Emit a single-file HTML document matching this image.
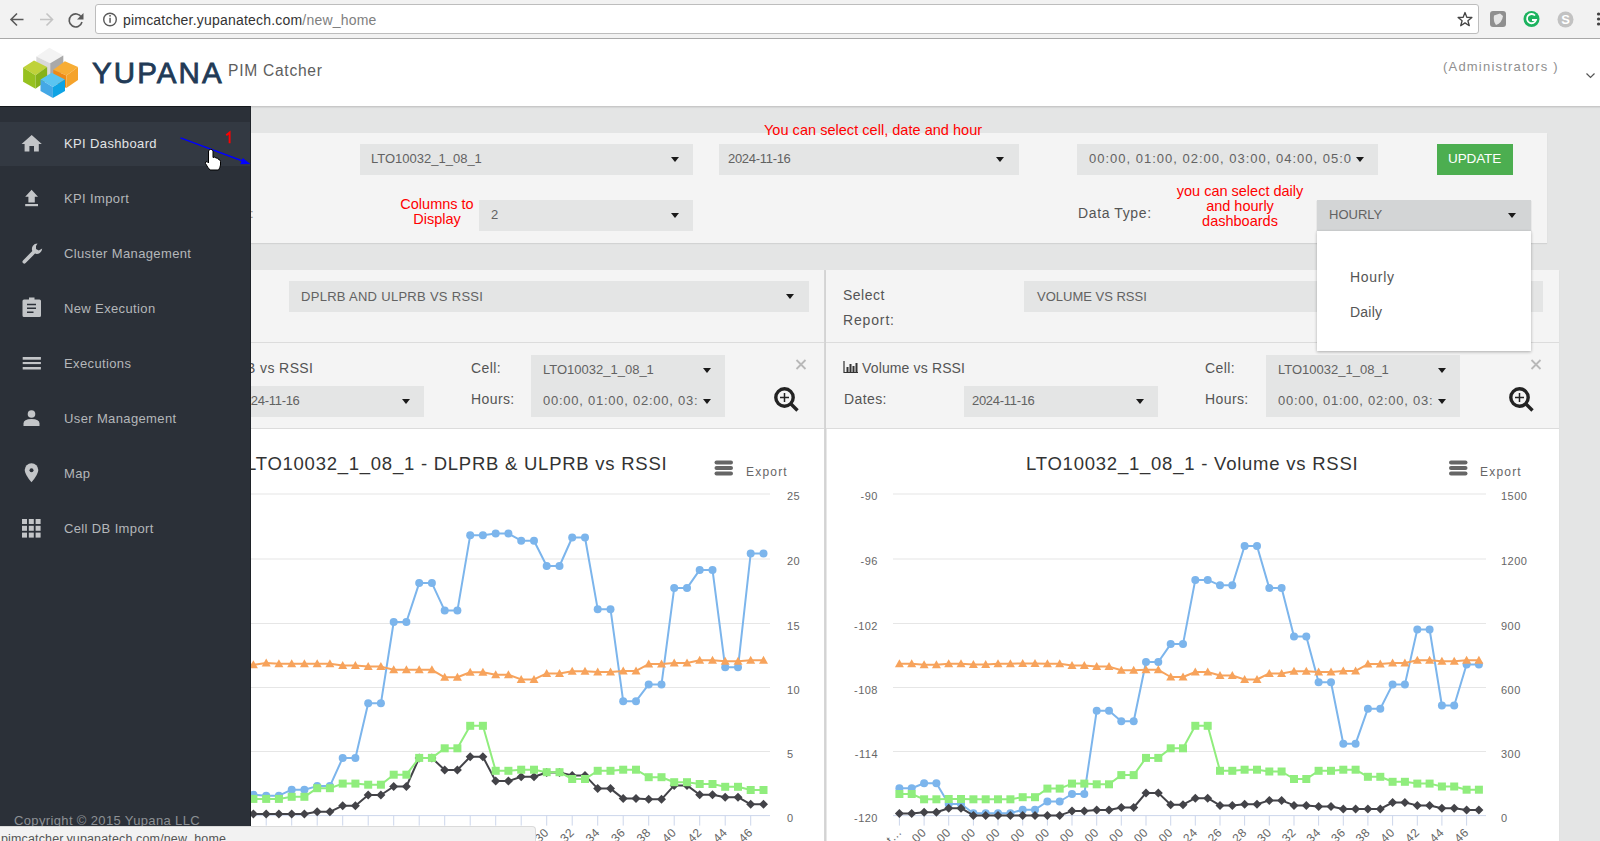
<!DOCTYPE html>
<html><head><meta charset="utf-8">
<style>
*{margin:0;padding:0;box-sizing:border-box}
html,body{width:1600px;height:841px;overflow:hidden;background:#e4e5e5;font-family:"Liberation Sans",sans-serif;position:relative}
.a{position:absolute}
.t{position:absolute;white-space:nowrap;line-height:1}
#chrome{left:0;top:0;width:1600px;height:39px;background:#f2f2f2;border-bottom:1px solid #a9a9a9}
#addr{left:95px;top:4px;width:1384px;height:30px;background:#fff;border:1px solid #bdbdbd;border-radius:3px}
#hdr{left:0;top:39px;width:1600px;height:68px;background:#fff;border-bottom:1px solid #c8c8c8;box-shadow:0 1px 1px rgba(0,0,0,0.06)}
#side{left:0;top:106px;width:251px;height:721px;background:#2b3038;border-right:1px solid #1f2329;border-top:1px solid #15181c}
.mi{position:absolute;left:64px;font-size:13px;color:#b4b7ba;letter-spacing:0.37px;white-space:nowrap;line-height:1}
.ic{position:absolute;left:0;top:0}
.panel{background:#f4f4f4;box-shadow:0 1px 1px rgba(0,0,0,0.08)}
.sel{position:absolute;background:#e4e5e5}
.caret{position:absolute;width:0;height:0;border-left:4.5px solid transparent;border-right:4.5px solid transparent;border-top:5px solid #1a1a1a}
.red{position:absolute;color:#ff0000;font-size:14.5px;text-align:center;white-space:nowrap;line-height:15px}
.lbl{position:absolute;font-size:14px;color:#555;white-space:nowrap;letter-spacing:0.4px;line-height:1}
.st{position:absolute;font-size:13px;color:#626262;white-space:nowrap;letter-spacing:0.6px;line-height:1;margin-top:-1px}
.ax{font-size:11px;fill:#666;font-family:"Liberation Sans",sans-serif}
</style></head><body>

<!-- ============ browser chrome ============ -->
<div id="chrome" class="a"></div>
<div id="addr" class="a"></div>
<svg class="a" style="left:0;top:0" width="1600" height="39">
  <!-- back -->
  <path d="M23.5,19.5H11M17,13.5L11,19.5L17,25.5" fill="none" stroke="#5a5a5a" stroke-width="1.6"/>
  <!-- forward -->
  <path d="M40,19.5H52.5M46.5,13.5L52.5,19.5L46.5,25.5" fill="none" stroke="#c4c4c4" stroke-width="1.6"/>
  <!-- reload -->
  <path d="M81.5,17.5A6.5,6.5 0 1 0 82,22" fill="none" stroke="#5a5a5a" stroke-width="1.6"/>
  <path d="M83.5,13V19.5H77Z" fill="#5a5a5a"/>
  <!-- info -->
  <circle cx="110" cy="19.5" r="6.3" fill="none" stroke="#5a5a5a" stroke-width="1.4"/>
  <rect x="109.3" y="17.8" width="1.5" height="5" fill="#5a5a5a"/><rect x="109.3" y="15" width="1.5" height="1.6" fill="#5a5a5a"/>
  <!-- star -->
  <path d="M1465.0,12.5L1466.8,17.3L1471.9,17.5L1467.9,20.8L1469.3,25.7L1465.0,22.9L1460.7,25.7L1462.1,20.8L1458.1,17.5L1463.2,17.3Z" fill="none" stroke="#444" stroke-width="1.3" stroke-linejoin="round"/>
  <!-- ext 1 gray shield -->
  <rect x="1490" y="11" width="16" height="16" rx="3" fill="#8f8f8f"/>
  <path d="M1494,15.5L1500,13.5L1503,16Q1502,23 1496,25Q1493,21 1494,15.5Z" fill="#e6e6e6"/>
  <!-- ext 2 grammarly -->
  <circle cx="1531.5" cy="19" r="8" fill="#1db35f"/>
  <path d="M1535,15.5A4.6,4.6 0 1 0 1536,20H1532" fill="none" stroke="#fff" stroke-width="1.8"/>
  <!-- ext 3 skype gray -->
  <circle cx="1565.5" cy="19.5" r="8" fill="#c2c2c2"/>
  <text x="1565.5" y="24" text-anchor="middle" font-size="13" font-weight="bold" fill="#fff" font-family="Liberation Sans">S</text>
  <!-- menu dots -->
  <circle cx="1598.5" cy="14" r="1.6" fill="#444"/><circle cx="1598.5" cy="19" r="1.6" fill="#444"/><circle cx="1598.5" cy="24" r="1.6" fill="#444"/>
</svg>
<div class="t" style="left:123px;top:13px;font-size:14px;letter-spacing:0.2px;color:#333">pimcatcher.yupanatech.com<span style="color:#808080">/new_home</span></div>

<!-- ============ header ============ -->
<div id="hdr" class="a"></div>
<svg class="a" style="left:0;top:39px" width="100" height="67" viewBox="0 39 100 67">
  <!-- white cube -->
  <path d="M36.3,56.6L49.4,47.7L63.3,55.5L50.2,63.2Z" fill="#f3f3f3"/>
  <path d="M36.3,56.6L50.2,63.2L50.2,78L36.3,72Z" fill="#d9d9d9"/>
  <path d="M50.2,63.2L63.3,55.5L63.3,72L50.2,78Z" fill="#a9a9a9"/>
  <!-- green cube -->
  <path d="M23.1,67.4L34,60.5L47.1,67L35.5,75.2Z" fill="#bfd23a"/>
  <path d="M23.1,67.4L35.5,75.2L35.5,88.7L23.1,81.7Z" fill="#96c11f"/>
  <path d="M35.5,75.2L47.1,67L47.1,80.5L35.5,88.7Z" fill="#86b21a"/>
  <!-- orange cube -->
  <path d="M53.3,69.8L64.9,61.3L78,67L66.4,75.5Z" fill="#f7ad35"/>
  <path d="M53.3,69.8L66.4,75.5L66.4,88L53.3,82Z" fill="#ee8a16"/>
  <path d="M66.4,75.5L78,67L78,80L66.4,88Z" fill="#f5a32b"/>
  <!-- blue cube -->
  <path d="M40.5,79.4L51.7,72.8L65,79.4L52.9,87.1Z" fill="#5ac4f1"/>
  <path d="M40.5,79.4L52.9,87.1L52.9,98L40.5,91Z" fill="#44a8e6"/>
  <path d="M52.9,87.1L65,79.4L65,91L52.9,98Z" fill="#0ea3e4"/>
</svg>
<div class="t" style="left:92px;top:58.3px;font-size:29.5px;color:#213a56;letter-spacing:2.1px;-webkit-text-stroke:0.8px #213a56">YUPANA</div>
<div class="t" style="left:228px;top:62.7px;font-size:15.6px;color:#5d5d5d;letter-spacing:0.73px">PIM Catcher</div>
<div class="t" style="left:1443px;top:60px;font-size:13px;color:#8f8f8f;letter-spacing:1.2px">(Administrators )</div>
<svg class="a" style="left:1584px;top:70px" width="14" height="10"><path d="M2.5,3.5L6.5,7.5L10.5,3.5" fill="none" stroke="#555" stroke-width="1.2"/></svg>

<!-- ============ main: filter panel ============ -->
<div class="a panel" style="left:250px;top:133px;width:1297px;height:110px"></div>
<div class="sel" style="left:360px;top:144px;width:333px;height:31px"></div>
<div class="st" style="left:371px;top:153px;letter-spacing:0">LTO10032_1_08_1</div>
<div class="caret" style="left:671px;top:157px"></div>

<div class="sel" style="left:719px;top:144px;width:300px;height:31px"></div>
<div class="st" style="left:728px;top:153px;letter-spacing:-0.3px">2024-11-16</div>
<div class="caret" style="left:996px;top:157px"></div>

<div class="sel" style="left:1077px;top:144px;width:301px;height:31px;overflow:hidden">
  <div class="st" style="left:12px;top:9px;letter-spacing:1.0px;width:262px;overflow:hidden">00:00, 01:00, 02:00, 03:00, 04:00, 05:00</div>
</div>
<div class="caret" style="left:1356px;top:157px"></div>

<div class="a" style="left:1437px;top:144px;width:76px;height:31px;background:#4cae50"></div>
<div class="t" style="left:1448px;top:152px;font-size:13.5px;color:#fff;letter-spacing:-0.1px">UPDATE</div>

<div class="red" style="left:764px;top:123px;letter-spacing:0.03px">You can select cell, date and hour</div>
<div class="red" style="left:396px;top:197px;width:82px">Columns to<br>Display</div>
<div class="sel" style="left:479px;top:200px;width:214px;height:31px"></div>
<div class="st" style="left:491px;top:209px">2</div>
<div class="caret" style="left:671px;top:213px"></div>
<div class="t" style="left:250px;top:207px;font-size:13px;color:#888">:</div>

<div class="lbl" style="left:1078px;top:206px;letter-spacing:0.62px">Data Type:</div>
<div class="red" style="left:1170px;top:184px;width:140px">you can select daily<br>and hourly<br>dashboards</div>

<div class="a" style="left:1317px;top:200px;width:214px;height:31px;background:#d3d5d6;box-shadow:0 1px 1px rgba(0,0,0,0.25)"></div>
<div class="st" style="left:1329px;top:209px;letter-spacing:0px">HOURLY</div>
<div class="caret" style="left:1508px;top:213px"></div>

<!-- ============ report row ============ -->
<div class="a panel" style="left:250px;top:270px;width:574px;height:571px"></div>
<div class="a" style="left:824px;top:270px;width:2px;height:571px;background:#d6d6d6"></div>
<div class="a panel" style="left:826px;top:270px;width:733px;height:571px"></div>
<!-- separators -->
<div class="a" style="left:250px;top:342px;width:574px;height:1px;background:#dcdcdc"></div>
<div class="a" style="left:826px;top:342px;width:733px;height:1px;background:#dcdcdc"></div>
<div class="a" style="left:250px;top:428px;width:574px;height:1px;background:#dcdcdc"></div>
<div class="a" style="left:826px;top:428px;width:733px;height:1px;background:#dcdcdc"></div>
<!-- chart white areas -->
<div class="a" style="left:250px;top:429px;width:574px;height:412px;background:#fff"></div>
<div class="a" style="left:826px;top:429px;width:733px;height:412px;background:#fff;border-left:1px solid #e8e8e8"></div>

<!-- left panel controls -->
<div class="sel" style="left:289px;top:281px;width:520px;height:31px"></div>
<div class="st" style="left:301px;top:291px;letter-spacing:0.29px">DPLRB AND ULPRB VS RSSI</div>
<div class="caret" style="left:786px;top:294px"></div>

<div class="lbl" style="left:246px;top:361px">B vs RSSI</div>
<div class="sel" style="left:250px;top:386px;width:174px;height:31px"></div>
<div class="st" style="left:237px;top:395px;letter-spacing:-0.3px">2024-11-16</div>
<div class="caret" style="left:402px;top:399px"></div>
<div class="lbl" style="left:471px;top:361px">Cell:</div>
<div class="lbl" style="left:471px;top:392px">Hours:</div>
<div class="sel" style="left:531px;top:355px;width:194px;height:62px"></div>
<div class="st" style="left:543px;top:364px;letter-spacing:0">LTO10032_1_08_1</div>
<div class="caret" style="left:703px;top:368px"></div>
<div class="a" style="left:531px;top:386px;width:194px;height:31px;overflow:hidden">
 <div class="st" style="left:12px;top:9px;width:155px;overflow:hidden;letter-spacing:0.75px">00:00, 01:00, 02:00, 03:00</div>
</div>
<div class="caret" style="left:703px;top:399px"></div>
<svg class="a" style="left:790px;top:354px" width="22" height="22"><path d="M6.5,6L15.5,15M15.5,6L6.5,15" stroke="#b8b8b8" stroke-width="1.8"/></svg>
<svg class="a" style="left:770.5px;top:384px" width="34" height="34">
  <circle cx="13.5" cy="13.5" r="8.7" fill="none" stroke="#232323" stroke-width="3.4"/>
  <path d="M19.5,19.5L26.5,26.5" stroke="#232323" stroke-width="3.4"/>
  <path d="M13.5,9V18M9,13.5H18" stroke="#232323" stroke-width="1.5"/>
</svg>

<!-- right panel controls -->
<div class="lbl" style="left:843px;top:288px;letter-spacing:0.5px">Select</div>
<div class="lbl" style="left:843px;top:313px;letter-spacing:0.85px">Report:</div>
<div class="sel" style="left:1024px;top:281px;width:519px;height:31px"></div>
<div class="st" style="left:1037px;top:291px;letter-spacing:0px">VOLUME VS RSSI</div>

<svg class="a" style="left:843px;top:360px" width="16" height="14">
  <path d="M1,1V12.5H15" fill="none" stroke="#333" stroke-width="1.2"/>
  <rect x="3.5" y="7" width="2" height="5" fill="#333"/><rect x="6.5" y="4" width="2" height="8" fill="#333"/>
  <rect x="9.5" y="6" width="2" height="6" fill="#333"/><rect x="12.5" y="3" width="2" height="9" fill="#333"/>
</svg>
<div class="lbl" style="left:862px;top:361px;letter-spacing:0.14px">Volume vs RSSI</div>
<div class="lbl" style="left:844px;top:392px">Dates:</div>
<div class="sel" style="left:964px;top:386px;width:194px;height:31px"></div>
<div class="st" style="left:972px;top:395px;letter-spacing:-0.3px">2024-11-16</div>
<div class="caret" style="left:1136px;top:399px"></div>
<div class="lbl" style="left:1205px;top:361px">Cell:</div>
<div class="lbl" style="left:1205px;top:392px">Hours:</div>
<div class="sel" style="left:1266px;top:355px;width:194px;height:62px"></div>
<div class="st" style="left:1278px;top:364px;letter-spacing:0">LTO10032_1_08_1</div>
<div class="caret" style="left:1438px;top:368px"></div>
<div class="a" style="left:1266px;top:386px;width:194px;height:31px;overflow:hidden">
 <div class="st" style="left:12px;top:9px;width:155px;overflow:hidden;letter-spacing:0.75px">00:00, 01:00, 02:00, 03:00</div>
</div>
<div class="caret" style="left:1438px;top:399px"></div>
<svg class="a" style="left:1525px;top:354px" width="22" height="22"><path d="M6.5,6L15.5,15M15.5,6L6.5,15" stroke="#b8b8b8" stroke-width="1.8"/></svg>
<svg class="a" style="left:1505.5px;top:384px" width="34" height="34">
  <circle cx="13.5" cy="13.5" r="8.7" fill="none" stroke="#232323" stroke-width="3.4"/>
  <path d="M19.5,19.5L26.5,26.5" stroke="#232323" stroke-width="3.4"/>
  <path d="M13.5,9V18M9,13.5H18" stroke="#232323" stroke-width="1.5"/>
</svg>

<!-- ============ charts ============ -->
<svg class="a" style="left:0;top:0" width="1600" height="841">
  <defs><clipPath id="cl"><rect x="250" y="429" width="574" height="412"/></clipPath>
  <clipPath id="cr"><rect x="827" y="429" width="732" height="412"/></clipPath></defs>
  <g clip-path="url(#cl)"><rect x="150" y="493.5" width="620" height="1" fill="#e6e6e6"/><rect x="150" y="558.5" width="620" height="1" fill="#e6e6e6"/><rect x="150" y="623.0" width="620" height="1" fill="#e6e6e6"/><rect x="150" y="687.0" width="620" height="1" fill="#e6e6e6"/><rect x="150" y="751.0" width="620" height="1" fill="#e6e6e6"/><rect x="150" y="815.1" width="620" height="1" fill="#ccd6eb"/><rect x="163.7" y="815.6" width="1" height="10" fill="#ccd6eb"/><rect x="189.2" y="815.6" width="1" height="10" fill="#ccd6eb"/><rect x="214.7" y="815.6" width="1" height="10" fill="#ccd6eb"/><rect x="240.2" y="815.6" width="1" height="10" fill="#ccd6eb"/><rect x="265.7" y="815.6" width="1" height="10" fill="#ccd6eb"/><rect x="291.2" y="815.6" width="1" height="10" fill="#ccd6eb"/><rect x="316.7" y="815.6" width="1" height="10" fill="#ccd6eb"/><rect x="342.2" y="815.6" width="1" height="10" fill="#ccd6eb"/><rect x="367.7" y="815.6" width="1" height="10" fill="#ccd6eb"/><rect x="393.2" y="815.6" width="1" height="10" fill="#ccd6eb"/><rect x="418.7" y="815.6" width="1" height="10" fill="#ccd6eb"/><rect x="444.2" y="815.6" width="1" height="10" fill="#ccd6eb"/><rect x="469.7" y="815.6" width="1" height="10" fill="#ccd6eb"/><rect x="495.2" y="815.6" width="1" height="10" fill="#ccd6eb"/><rect x="520.7" y="815.6" width="1" height="10" fill="#ccd6eb"/><rect x="546.2" y="815.6" width="1" height="10" fill="#ccd6eb"/><rect x="571.7" y="815.6" width="1" height="10" fill="#ccd6eb"/><rect x="597.2" y="815.6" width="1" height="10" fill="#ccd6eb"/><rect x="622.7" y="815.6" width="1" height="10" fill="#ccd6eb"/><rect x="648.2" y="815.6" width="1" height="10" fill="#ccd6eb"/><rect x="673.7" y="815.6" width="1" height="10" fill="#ccd6eb"/><rect x="699.2" y="815.6" width="1" height="10" fill="#ccd6eb"/><rect x="724.7" y="815.6" width="1" height="10" fill="#ccd6eb"/><rect x="750.2" y="815.6" width="1" height="10" fill="#ccd6eb"/><g fill="#7cb5ec"><polyline points="227.9,794.7 240.7,794.7 253.4,794.7 266.2,795.7 278.9,795.7 291.7,789.7 304.4,789.7 317.2,786.1 329.9,786.1 342.7,757.9 355.4,757.9 368.2,703.3 380.9,703.3 393.7,622.0 406.4,622.0 419.2,583.1 431.9,583.1 444.7,610.6 457.4,610.6 470.2,535.3 482.9,535.3 495.7,533.6 508.4,533.6 521.2,540.7 534.0,540.7 546.7,566.0 559.5,566.0 572.2,537.5 585.0,537.5 597.7,609.2 610.5,609.2 623.2,701.2 636.0,701.2 648.7,684.4 661.5,684.4 674.2,588.1 687.0,588.1 699.7,569.9 712.5,569.9 725.2,667.3 738.0,667.3 750.7,553.5 763.5,553.5" fill="none" stroke="#7cb5ec" stroke-width="2" stroke-linejoin="round" stroke-linecap="round"/><circle cx="227.9" cy="794.7" r="4"/><circle cx="240.7" cy="794.7" r="4"/><circle cx="253.4" cy="794.7" r="4"/><circle cx="266.2" cy="795.7" r="4"/><circle cx="278.9" cy="795.7" r="4"/><circle cx="291.7" cy="789.7" r="4"/><circle cx="304.4" cy="789.7" r="4"/><circle cx="317.2" cy="786.1" r="4"/><circle cx="329.9" cy="786.1" r="4"/><circle cx="342.7" cy="757.9" r="4"/><circle cx="355.4" cy="757.9" r="4"/><circle cx="368.2" cy="703.3" r="4"/><circle cx="380.9" cy="703.3" r="4"/><circle cx="393.7" cy="622.0" r="4"/><circle cx="406.4" cy="622.0" r="4"/><circle cx="419.2" cy="583.1" r="4"/><circle cx="431.9" cy="583.1" r="4"/><circle cx="444.7" cy="610.6" r="4"/><circle cx="457.4" cy="610.6" r="4"/><circle cx="470.2" cy="535.3" r="4"/><circle cx="482.9" cy="535.3" r="4"/><circle cx="495.7" cy="533.6" r="4"/><circle cx="508.4" cy="533.6" r="4"/><circle cx="521.2" cy="540.7" r="4"/><circle cx="534.0" cy="540.7" r="4"/><circle cx="546.7" cy="566.0" r="4"/><circle cx="559.5" cy="566.0" r="4"/><circle cx="572.2" cy="537.5" r="4"/><circle cx="585.0" cy="537.5" r="4"/><circle cx="597.7" cy="609.2" r="4"/><circle cx="610.5" cy="609.2" r="4"/><circle cx="623.2" cy="701.2" r="4"/><circle cx="636.0" cy="701.2" r="4"/><circle cx="648.7" cy="684.4" r="4"/><circle cx="661.5" cy="684.4" r="4"/><circle cx="674.2" cy="588.1" r="4"/><circle cx="687.0" cy="588.1" r="4"/><circle cx="699.7" cy="569.9" r="4"/><circle cx="712.5" cy="569.9" r="4"/><circle cx="725.2" cy="667.3" r="4"/><circle cx="738.0" cy="667.3" r="4"/><circle cx="750.7" cy="553.5" r="4"/><circle cx="763.5" cy="553.5" r="4"/></g><g fill="#434348"><polyline points="227.9,813.9 240.7,813.9 253.4,813.9 266.2,813.9 278.9,813.9 291.7,813.9 304.4,813.9 317.2,811.8 329.9,811.8 342.7,805.7 355.4,805.7 368.2,795.0 380.9,795.0 393.7,786.5 406.4,786.5 419.2,757.9 431.9,757.9 444.7,770.0 457.4,770.0 470.2,756.8 482.9,756.8 495.7,781.1 508.4,781.1 521.2,776.8 534.0,776.8 546.7,772.5 559.5,772.5 572.2,775.4 585.0,775.4 597.7,788.6 610.5,788.6 623.2,798.6 636.0,798.6 648.7,799.3 661.5,799.3 674.2,785.4 687.0,785.4 699.7,794.7 712.5,794.7 725.2,797.2 738.0,797.2 750.7,804.3 763.5,804.3" fill="none" stroke="#434348" stroke-width="2" stroke-linejoin="round" stroke-linecap="round"/><path d="M227.9,809.4L232.4,813.9L227.9,818.4L223.4,813.9Z"/><path d="M240.7,809.4L245.2,813.9L240.7,818.4L236.2,813.9Z"/><path d="M253.4,809.4L257.9,813.9L253.4,818.4L248.9,813.9Z"/><path d="M266.2,809.4L270.7,813.9L266.2,818.4L261.7,813.9Z"/><path d="M278.9,809.4L283.4,813.9L278.9,818.4L274.4,813.9Z"/><path d="M291.7,809.4L296.2,813.9L291.7,818.4L287.2,813.9Z"/><path d="M304.4,809.4L308.9,813.9L304.4,818.4L299.9,813.9Z"/><path d="M317.2,807.3L321.7,811.8L317.2,816.3L312.7,811.8Z"/><path d="M329.9,807.3L334.4,811.8L329.9,816.3L325.4,811.8Z"/><path d="M342.7,801.2L347.2,805.7L342.7,810.2L338.2,805.7Z"/><path d="M355.4,801.2L359.9,805.7L355.4,810.2L350.9,805.7Z"/><path d="M368.2,790.5L372.7,795.0L368.2,799.5L363.7,795.0Z"/><path d="M380.9,790.5L385.4,795.0L380.9,799.5L376.4,795.0Z"/><path d="M393.7,782.0L398.2,786.5L393.7,791.0L389.2,786.5Z"/><path d="M406.4,782.0L410.9,786.5L406.4,791.0L401.9,786.5Z"/><path d="M419.2,753.4L423.7,757.9L419.2,762.4L414.7,757.9Z"/><path d="M431.9,753.4L436.4,757.9L431.9,762.4L427.4,757.9Z"/><path d="M444.7,765.5L449.2,770.0L444.7,774.5L440.2,770.0Z"/><path d="M457.4,765.5L461.9,770.0L457.4,774.5L452.9,770.0Z"/><path d="M470.2,752.3L474.7,756.8L470.2,761.3L465.7,756.8Z"/><path d="M482.9,752.3L487.4,756.8L482.9,761.3L478.4,756.8Z"/><path d="M495.7,776.6L500.2,781.1L495.7,785.6L491.2,781.1Z"/><path d="M508.4,776.6L513.0,781.1L508.4,785.6L503.9,781.1Z"/><path d="M521.2,772.3L525.7,776.8L521.2,781.3L516.7,776.8Z"/><path d="M534.0,772.3L538.5,776.8L534.0,781.3L529.5,776.8Z"/><path d="M546.7,768.0L551.2,772.5L546.7,777.0L542.2,772.5Z"/><path d="M559.5,768.0L564.0,772.5L559.5,777.0L555.0,772.5Z"/><path d="M572.2,770.9L576.7,775.4L572.2,779.9L567.7,775.4Z"/><path d="M585.0,770.9L589.5,775.4L585.0,779.9L580.5,775.4Z"/><path d="M597.7,784.1L602.2,788.6L597.7,793.1L593.2,788.6Z"/><path d="M610.5,784.1L615.0,788.6L610.5,793.1L606.0,788.6Z"/><path d="M623.2,794.1L627.7,798.6L623.2,803.1L618.7,798.6Z"/><path d="M636.0,794.1L640.5,798.6L636.0,803.1L631.5,798.6Z"/><path d="M648.7,794.8L653.2,799.3L648.7,803.8L644.2,799.3Z"/><path d="M661.5,794.8L666.0,799.3L661.5,803.8L657.0,799.3Z"/><path d="M674.2,780.9L678.7,785.4L674.2,789.9L669.7,785.4Z"/><path d="M687.0,780.9L691.5,785.4L687.0,789.9L682.5,785.4Z"/><path d="M699.7,790.2L704.2,794.7L699.7,799.2L695.2,794.7Z"/><path d="M712.5,790.2L717.0,794.7L712.5,799.2L708.0,794.7Z"/><path d="M725.2,792.7L729.7,797.2L725.2,801.7L720.7,797.2Z"/><path d="M738.0,792.7L742.5,797.2L738.0,801.7L733.5,797.2Z"/><path d="M750.7,799.8L755.2,804.3L750.7,808.8L746.2,804.3Z"/><path d="M763.5,799.8L768.0,804.3L763.5,808.8L759.0,804.3Z"/></g><g fill="#90ed7d"><polyline points="227.9,798.9 240.7,798.9 253.4,798.9 266.2,798.9 278.9,798.9 291.7,796.8 304.4,796.8 317.2,788.2 329.9,788.2 342.7,783.6 355.4,783.6 368.2,784.7 380.9,784.7 393.7,774.7 406.4,774.7 419.2,757.9 431.9,757.9 444.7,748.3 457.4,748.3 470.2,725.8 482.9,725.8 495.7,770.8 508.4,770.8 521.2,769.7 534.0,769.7 546.7,772.2 559.5,772.2 572.2,779.0 585.0,779.0 597.7,770.8 610.5,770.8 623.2,769.7 636.0,769.7 648.7,777.2 661.5,777.2 674.2,782.2 687.0,782.2 699.7,784.0 712.5,784.0 725.2,786.8 738.0,786.8 750.7,790.0 763.5,790.0" fill="none" stroke="#90ed7d" stroke-width="2" stroke-linejoin="round" stroke-linecap="round"/><rect x="223.9" y="794.9" width="8" height="8"/><rect x="236.7" y="794.9" width="8" height="8"/><rect x="249.4" y="794.9" width="8" height="8"/><rect x="262.2" y="794.9" width="8" height="8"/><rect x="274.9" y="794.9" width="8" height="8"/><rect x="287.7" y="792.8" width="8" height="8"/><rect x="300.4" y="792.8" width="8" height="8"/><rect x="313.2" y="784.2" width="8" height="8"/><rect x="325.9" y="784.2" width="8" height="8"/><rect x="338.7" y="779.6" width="8" height="8"/><rect x="351.4" y="779.6" width="8" height="8"/><rect x="364.2" y="780.7" width="8" height="8"/><rect x="376.9" y="780.7" width="8" height="8"/><rect x="389.7" y="770.7" width="8" height="8"/><rect x="402.4" y="770.7" width="8" height="8"/><rect x="415.2" y="753.9" width="8" height="8"/><rect x="427.9" y="753.9" width="8" height="8"/><rect x="440.7" y="744.3" width="8" height="8"/><rect x="453.4" y="744.3" width="8" height="8"/><rect x="466.2" y="721.8" width="8" height="8"/><rect x="478.9" y="721.8" width="8" height="8"/><rect x="491.7" y="766.8" width="8" height="8"/><rect x="504.4" y="766.8" width="8" height="8"/><rect x="517.2" y="765.7" width="8" height="8"/><rect x="530.0" y="765.7" width="8" height="8"/><rect x="542.7" y="768.2" width="8" height="8"/><rect x="555.5" y="768.2" width="8" height="8"/><rect x="568.2" y="775.0" width="8" height="8"/><rect x="581.0" y="775.0" width="8" height="8"/><rect x="593.7" y="766.8" width="8" height="8"/><rect x="606.5" y="766.8" width="8" height="8"/><rect x="619.2" y="765.7" width="8" height="8"/><rect x="632.0" y="765.7" width="8" height="8"/><rect x="644.7" y="773.2" width="8" height="8"/><rect x="657.5" y="773.2" width="8" height="8"/><rect x="670.2" y="778.2" width="8" height="8"/><rect x="683.0" y="778.2" width="8" height="8"/><rect x="695.7" y="780.0" width="8" height="8"/><rect x="708.5" y="780.0" width="8" height="8"/><rect x="721.2" y="782.8" width="8" height="8"/><rect x="734.0" y="782.8" width="8" height="8"/><rect x="746.7" y="786.0" width="8" height="8"/><rect x="759.5" y="786.0" width="8" height="8"/></g><g fill="#f7a35c"><polyline points="227.9,664.8 240.7,664.8 253.4,664.8 266.2,663.0 278.9,663.7 291.7,663.7 304.4,663.7 317.2,663.7 329.9,663.7 342.7,665.5 355.4,665.5 368.2,666.6 380.9,666.6 393.7,669.8 406.4,669.8 419.2,669.8 431.9,669.8 444.7,677.3 457.4,677.3 470.2,672.3 482.9,672.3 495.7,674.8 508.4,674.8 521.2,679.4 534.0,679.4 546.7,673.4 559.5,673.4 572.2,671.2 585.0,671.2 597.7,672.0 610.5,672.0 623.2,670.9 636.0,670.9 648.7,664.1 661.5,664.1 674.2,663.0 687.0,663.0 699.7,660.2 712.5,660.2 725.2,661.3 738.0,661.3 750.7,660.2 763.5,660.2" fill="none" stroke="#f7a35c" stroke-width="2" stroke-linejoin="round" stroke-linecap="round"/><path d="M227.9,660.3L232.4,668.3L223.4,668.3Z"/><path d="M240.7,660.3L245.2,668.3L236.2,668.3Z"/><path d="M253.4,660.3L257.9,668.3L248.9,668.3Z"/><path d="M266.2,658.5L270.7,666.5L261.7,666.5Z"/><path d="M278.9,659.2L283.4,667.2L274.4,667.2Z"/><path d="M291.7,659.2L296.2,667.2L287.2,667.2Z"/><path d="M304.4,659.2L308.9,667.2L299.9,667.2Z"/><path d="M317.2,659.2L321.7,667.2L312.7,667.2Z"/><path d="M329.9,659.2L334.4,667.2L325.4,667.2Z"/><path d="M342.7,661.0L347.2,669.0L338.2,669.0Z"/><path d="M355.4,661.0L359.9,669.0L350.9,669.0Z"/><path d="M368.2,662.1L372.7,670.1L363.7,670.1Z"/><path d="M380.9,662.1L385.4,670.1L376.4,670.1Z"/><path d="M393.7,665.3L398.2,673.3L389.2,673.3Z"/><path d="M406.4,665.3L410.9,673.3L401.9,673.3Z"/><path d="M419.2,665.3L423.7,673.3L414.7,673.3Z"/><path d="M431.9,665.3L436.4,673.3L427.4,673.3Z"/><path d="M444.7,672.8L449.2,680.8L440.2,680.8Z"/><path d="M457.4,672.8L461.9,680.8L452.9,680.8Z"/><path d="M470.2,667.8L474.7,675.8L465.7,675.8Z"/><path d="M482.9,667.8L487.4,675.8L478.4,675.8Z"/><path d="M495.7,670.3L500.2,678.3L491.2,678.3Z"/><path d="M508.4,670.3L513.0,678.3L503.9,678.3Z"/><path d="M521.2,674.9L525.7,682.9L516.7,682.9Z"/><path d="M534.0,674.9L538.5,682.9L529.5,682.9Z"/><path d="M546.7,668.9L551.2,676.9L542.2,676.9Z"/><path d="M559.5,668.9L564.0,676.9L555.0,676.9Z"/><path d="M572.2,666.7L576.7,674.7L567.7,674.7Z"/><path d="M585.0,666.7L589.5,674.7L580.5,674.7Z"/><path d="M597.7,667.5L602.2,675.5L593.2,675.5Z"/><path d="M610.5,667.5L615.0,675.5L606.0,675.5Z"/><path d="M623.2,666.4L627.7,674.4L618.7,674.4Z"/><path d="M636.0,666.4L640.5,674.4L631.5,674.4Z"/><path d="M648.7,659.6L653.2,667.6L644.2,667.6Z"/><path d="M661.5,659.6L666.0,667.6L657.0,667.6Z"/><path d="M674.2,658.5L678.7,666.5L669.7,666.5Z"/><path d="M687.0,658.5L691.5,666.5L682.5,666.5Z"/><path d="M699.7,655.7L704.2,663.7L695.2,663.7Z"/><path d="M712.5,655.7L717.0,663.7L708.0,663.7Z"/><path d="M725.2,656.8L729.7,664.8L720.7,664.8Z"/><path d="M738.0,656.8L742.5,664.8L733.5,664.8Z"/><path d="M750.7,655.7L755.2,663.7L746.2,663.7Z"/><path d="M763.5,655.7L768.0,663.7L759.0,663.7Z"/></g><text x="473.2" y="833" text-anchor="end" transform="rotate(-45 473.2 833)" class="ax" style="font-size:12px;letter-spacing:0.6px">24</text><text x="498.7" y="833" text-anchor="end" transform="rotate(-45 498.7 833)" class="ax" style="font-size:12px;letter-spacing:0.6px">26</text><text x="524.2" y="833" text-anchor="end" transform="rotate(-45 524.2 833)" class="ax" style="font-size:12px;letter-spacing:0.6px">28</text><text x="549.7" y="833" text-anchor="end" transform="rotate(-45 549.7 833)" class="ax" style="font-size:12px;letter-spacing:0.6px">30</text><text x="575.2" y="833" text-anchor="end" transform="rotate(-45 575.2 833)" class="ax" style="font-size:12px;letter-spacing:0.6px">32</text><text x="600.7" y="833" text-anchor="end" transform="rotate(-45 600.7 833)" class="ax" style="font-size:12px;letter-spacing:0.6px">34</text><text x="626.2" y="833" text-anchor="end" transform="rotate(-45 626.2 833)" class="ax" style="font-size:12px;letter-spacing:0.6px">36</text><text x="651.7" y="833" text-anchor="end" transform="rotate(-45 651.7 833)" class="ax" style="font-size:12px;letter-spacing:0.6px">38</text><text x="677.2" y="833" text-anchor="end" transform="rotate(-45 677.2 833)" class="ax" style="font-size:12px;letter-spacing:0.6px">40</text><text x="702.7" y="833" text-anchor="end" transform="rotate(-45 702.7 833)" class="ax" style="font-size:12px;letter-spacing:0.6px">42</text><text x="728.2" y="833" text-anchor="end" transform="rotate(-45 728.2 833)" class="ax" style="font-size:12px;letter-spacing:0.6px">44</text><text x="753.7" y="833" text-anchor="end" transform="rotate(-45 753.7 833)" class="ax" style="font-size:12px;letter-spacing:0.6px">46</text><text x="787" y="500.0" class="ax" style="letter-spacing:0.5px">25</text><text x="787" y="565.0" class="ax" style="letter-spacing:0.5px">20</text><text x="787" y="629.5" class="ax" style="letter-spacing:0.5px">15</text><text x="787" y="693.5" class="ax" style="letter-spacing:0.5px">10</text><text x="787" y="757.5" class="ax" style="letter-spacing:0.5px">5</text><text x="787" y="821.6" class="ax" style="letter-spacing:0.5px">0</text></g>
  <g clip-path="url(#cr)"><rect x="893" y="493.5" width="593" height="1" fill="#e6e6e6"/><rect x="893" y="558.5" width="593" height="1" fill="#e6e6e6"/><rect x="893" y="623.0" width="593" height="1" fill="#e6e6e6"/><rect x="893" y="687.0" width="593" height="1" fill="#e6e6e6"/><rect x="893" y="751.0" width="593" height="1" fill="#e6e6e6"/><rect x="893" y="815.1" width="593" height="1" fill="#ccd6eb"/><rect x="898.9" y="815.6" width="1" height="10" fill="#ccd6eb"/><rect x="923.6" y="815.6" width="1" height="10" fill="#ccd6eb"/><rect x="948.2" y="815.6" width="1" height="10" fill="#ccd6eb"/><rect x="972.9" y="815.6" width="1" height="10" fill="#ccd6eb"/><rect x="997.5" y="815.6" width="1" height="10" fill="#ccd6eb"/><rect x="1022.2" y="815.6" width="1" height="10" fill="#ccd6eb"/><rect x="1046.9" y="815.6" width="1" height="10" fill="#ccd6eb"/><rect x="1071.5" y="815.6" width="1" height="10" fill="#ccd6eb"/><rect x="1096.2" y="815.6" width="1" height="10" fill="#ccd6eb"/><rect x="1120.8" y="815.6" width="1" height="10" fill="#ccd6eb"/><rect x="1145.5" y="815.6" width="1" height="10" fill="#ccd6eb"/><rect x="1170.2" y="815.6" width="1" height="10" fill="#ccd6eb"/><rect x="1194.8" y="815.6" width="1" height="10" fill="#ccd6eb"/><rect x="1219.5" y="815.6" width="1" height="10" fill="#ccd6eb"/><rect x="1244.1" y="815.6" width="1" height="10" fill="#ccd6eb"/><rect x="1268.8" y="815.6" width="1" height="10" fill="#ccd6eb"/><rect x="1293.5" y="815.6" width="1" height="10" fill="#ccd6eb"/><rect x="1318.1" y="815.6" width="1" height="10" fill="#ccd6eb"/><rect x="1342.8" y="815.6" width="1" height="10" fill="#ccd6eb"/><rect x="1367.4" y="815.6" width="1" height="10" fill="#ccd6eb"/><rect x="1392.1" y="815.6" width="1" height="10" fill="#ccd6eb"/><rect x="1416.8" y="815.6" width="1" height="10" fill="#ccd6eb"/><rect x="1441.4" y="815.6" width="1" height="10" fill="#ccd6eb"/><rect x="1466.1" y="815.6" width="1" height="10" fill="#ccd6eb"/><g fill="#7cb5ec"><polyline points="899.4,788.3 911.7,788.3 924.1,783.3 936.4,783.3 948.7,804.0 961.0,804.0 973.4,813.2 985.7,813.2 998.0,813.2 1010.4,813.2 1022.7,809.7 1035.0,809.7 1047.4,801.5 1059.7,801.5 1072.0,794.0 1084.3,794.0 1096.7,710.8 1109.0,710.8 1121.3,721.2 1133.7,721.2 1146.0,662.0 1158.3,662.0 1170.7,644.1 1183.0,644.1 1195.3,579.9 1207.7,579.9 1220.0,585.3 1232.3,585.3 1244.6,546.0 1257.0,546.0 1269.3,588.1 1281.6,588.1 1294.0,636.6 1306.3,636.6 1318.6,682.3 1331.0,682.3 1343.3,743.7 1355.6,743.7 1367.9,708.7 1380.3,708.7 1392.6,684.4 1404.9,684.4 1417.3,629.5 1429.6,629.5 1441.9,705.5 1454.2,705.5 1466.6,664.5 1478.9,664.5" fill="none" stroke="#7cb5ec" stroke-width="2" stroke-linejoin="round" stroke-linecap="round"/><circle cx="899.4" cy="788.3" r="4"/><circle cx="911.7" cy="788.3" r="4"/><circle cx="924.1" cy="783.3" r="4"/><circle cx="936.4" cy="783.3" r="4"/><circle cx="948.7" cy="804.0" r="4"/><circle cx="961.0" cy="804.0" r="4"/><circle cx="973.4" cy="813.2" r="4"/><circle cx="985.7" cy="813.2" r="4"/><circle cx="998.0" cy="813.2" r="4"/><circle cx="1010.4" cy="813.2" r="4"/><circle cx="1022.7" cy="809.7" r="4"/><circle cx="1035.0" cy="809.7" r="4"/><circle cx="1047.4" cy="801.5" r="4"/><circle cx="1059.7" cy="801.5" r="4"/><circle cx="1072.0" cy="794.0" r="4"/><circle cx="1084.3" cy="794.0" r="4"/><circle cx="1096.7" cy="710.8" r="4"/><circle cx="1109.0" cy="710.8" r="4"/><circle cx="1121.3" cy="721.2" r="4"/><circle cx="1133.7" cy="721.2" r="4"/><circle cx="1146.0" cy="662.0" r="4"/><circle cx="1158.3" cy="662.0" r="4"/><circle cx="1170.7" cy="644.1" r="4"/><circle cx="1183.0" cy="644.1" r="4"/><circle cx="1195.3" cy="579.9" r="4"/><circle cx="1207.7" cy="579.9" r="4"/><circle cx="1220.0" cy="585.3" r="4"/><circle cx="1232.3" cy="585.3" r="4"/><circle cx="1244.6" cy="546.0" r="4"/><circle cx="1257.0" cy="546.0" r="4"/><circle cx="1269.3" cy="588.1" r="4"/><circle cx="1281.6" cy="588.1" r="4"/><circle cx="1294.0" cy="636.6" r="4"/><circle cx="1306.3" cy="636.6" r="4"/><circle cx="1318.6" cy="682.3" r="4"/><circle cx="1331.0" cy="682.3" r="4"/><circle cx="1343.3" cy="743.7" r="4"/><circle cx="1355.6" cy="743.7" r="4"/><circle cx="1367.9" cy="708.7" r="4"/><circle cx="1380.3" cy="708.7" r="4"/><circle cx="1392.6" cy="684.4" r="4"/><circle cx="1404.9" cy="684.4" r="4"/><circle cx="1417.3" cy="629.5" r="4"/><circle cx="1429.6" cy="629.5" r="4"/><circle cx="1441.9" cy="705.5" r="4"/><circle cx="1454.2" cy="705.5" r="4"/><circle cx="1466.6" cy="664.5" r="4"/><circle cx="1478.9" cy="664.5" r="4"/></g><g fill="#434348"><polyline points="899.4,813.6 911.7,813.6 924.1,812.2 936.4,812.2 948.7,808.2 961.0,808.2 973.4,815.4 985.7,815.4 998.0,815.4 1010.4,815.4 1022.7,815.4 1035.0,815.4 1047.4,815.4 1059.7,815.4 1072.0,811.1 1084.3,811.1 1096.7,810.0 1109.0,810.0 1121.3,807.5 1133.7,807.5 1146.0,792.9 1158.3,792.9 1170.7,804.7 1183.0,804.7 1195.3,798.2 1207.7,798.2 1220.0,805.4 1232.3,805.4 1244.6,804.3 1257.0,804.3 1269.3,800.4 1281.6,800.4 1294.0,805.4 1306.3,805.4 1318.6,806.4 1331.0,806.4 1343.3,808.9 1355.6,808.9 1367.9,808.9 1380.3,808.9 1392.6,802.5 1404.9,802.5 1417.3,805.4 1429.6,805.4 1441.9,808.2 1454.2,808.2 1466.6,810.0 1478.9,810.0" fill="none" stroke="#434348" stroke-width="2" stroke-linejoin="round" stroke-linecap="round"/><path d="M899.4,809.1L903.9,813.6L899.4,818.1L894.9,813.6Z"/><path d="M911.7,809.1L916.2,813.6L911.7,818.1L907.2,813.6Z"/><path d="M924.1,807.7L928.6,812.2L924.1,816.7L919.6,812.2Z"/><path d="M936.4,807.7L940.9,812.2L936.4,816.7L931.9,812.2Z"/><path d="M948.7,803.7L953.2,808.2L948.7,812.7L944.2,808.2Z"/><path d="M961.0,803.7L965.5,808.2L961.0,812.7L956.5,808.2Z"/><path d="M973.4,810.9L977.9,815.4L973.4,819.9L968.9,815.4Z"/><path d="M985.7,810.9L990.2,815.4L985.7,819.9L981.2,815.4Z"/><path d="M998.0,810.9L1002.5,815.4L998.0,819.9L993.5,815.4Z"/><path d="M1010.4,810.9L1014.9,815.4L1010.4,819.9L1005.9,815.4Z"/><path d="M1022.7,810.9L1027.2,815.4L1022.7,819.9L1018.2,815.4Z"/><path d="M1035.0,810.9L1039.5,815.4L1035.0,819.9L1030.5,815.4Z"/><path d="M1047.4,810.9L1051.9,815.4L1047.4,819.9L1042.9,815.4Z"/><path d="M1059.7,810.9L1064.2,815.4L1059.7,819.9L1055.2,815.4Z"/><path d="M1072.0,806.6L1076.5,811.1L1072.0,815.6L1067.5,811.1Z"/><path d="M1084.3,806.6L1088.8,811.1L1084.3,815.6L1079.8,811.1Z"/><path d="M1096.7,805.5L1101.2,810.0L1096.7,814.5L1092.2,810.0Z"/><path d="M1109.0,805.5L1113.5,810.0L1109.0,814.5L1104.5,810.0Z"/><path d="M1121.3,803.0L1125.8,807.5L1121.3,812.0L1116.8,807.5Z"/><path d="M1133.7,803.0L1138.2,807.5L1133.7,812.0L1129.2,807.5Z"/><path d="M1146.0,788.4L1150.5,792.9L1146.0,797.4L1141.5,792.9Z"/><path d="M1158.3,788.4L1162.8,792.9L1158.3,797.4L1153.8,792.9Z"/><path d="M1170.7,800.2L1175.2,804.7L1170.7,809.2L1166.2,804.7Z"/><path d="M1183.0,800.2L1187.5,804.7L1183.0,809.2L1178.5,804.7Z"/><path d="M1195.3,793.7L1199.8,798.2L1195.3,802.7L1190.8,798.2Z"/><path d="M1207.7,793.7L1212.2,798.2L1207.7,802.7L1203.2,798.2Z"/><path d="M1220.0,800.9L1224.5,805.4L1220.0,809.9L1215.5,805.4Z"/><path d="M1232.3,800.9L1236.8,805.4L1232.3,809.9L1227.8,805.4Z"/><path d="M1244.6,799.8L1249.1,804.3L1244.6,808.8L1240.1,804.3Z"/><path d="M1257.0,799.8L1261.5,804.3L1257.0,808.8L1252.5,804.3Z"/><path d="M1269.3,795.9L1273.8,800.4L1269.3,804.9L1264.8,800.4Z"/><path d="M1281.6,795.9L1286.1,800.4L1281.6,804.9L1277.1,800.4Z"/><path d="M1294.0,800.9L1298.5,805.4L1294.0,809.9L1289.5,805.4Z"/><path d="M1306.3,800.9L1310.8,805.4L1306.3,809.9L1301.8,805.4Z"/><path d="M1318.6,801.9L1323.1,806.4L1318.6,810.9L1314.1,806.4Z"/><path d="M1331.0,801.9L1335.5,806.4L1331.0,810.9L1326.5,806.4Z"/><path d="M1343.3,804.4L1347.8,808.9L1343.3,813.4L1338.8,808.9Z"/><path d="M1355.6,804.4L1360.1,808.9L1355.6,813.4L1351.1,808.9Z"/><path d="M1367.9,804.4L1372.4,808.9L1367.9,813.4L1363.4,808.9Z"/><path d="M1380.3,804.4L1384.8,808.9L1380.3,813.4L1375.8,808.9Z"/><path d="M1392.6,798.0L1397.1,802.5L1392.6,807.0L1388.1,802.5Z"/><path d="M1404.9,798.0L1409.4,802.5L1404.9,807.0L1400.4,802.5Z"/><path d="M1417.3,800.9L1421.8,805.4L1417.3,809.9L1412.8,805.4Z"/><path d="M1429.6,800.9L1434.1,805.4L1429.6,809.9L1425.1,805.4Z"/><path d="M1441.9,803.7L1446.4,808.2L1441.9,812.7L1437.4,808.2Z"/><path d="M1454.2,803.7L1458.8,808.2L1454.2,812.7L1449.8,808.2Z"/><path d="M1466.6,805.5L1471.1,810.0L1466.6,814.5L1462.1,810.0Z"/><path d="M1478.9,805.5L1483.4,810.0L1478.9,814.5L1474.4,810.0Z"/></g><g fill="#90ed7d"><polyline points="899.4,794.0 911.7,794.0 924.1,799.3 936.4,799.3 948.7,799.0 961.0,799.0 973.4,799.3 985.7,799.3 998.0,799.3 1010.4,799.3 1022.7,797.2 1035.0,797.2 1047.4,788.6 1059.7,788.6 1072.0,783.6 1084.3,783.6 1096.7,784.3 1109.0,784.3 1121.3,775.1 1133.7,775.1 1146.0,757.9 1158.3,757.9 1170.7,748.3 1183.0,748.3 1195.3,725.8 1207.7,725.8 1220.0,770.8 1232.3,770.8 1244.6,769.7 1257.0,769.7 1269.3,771.5 1281.6,771.5 1294.0,779.0 1306.3,779.0 1318.6,770.8 1331.0,770.8 1343.3,769.7 1355.6,769.7 1367.9,776.8 1380.3,776.8 1392.6,781.8 1404.9,781.8 1417.3,783.6 1429.6,783.6 1441.9,786.5 1454.2,786.5 1466.6,789.7 1478.9,789.7" fill="none" stroke="#90ed7d" stroke-width="2" stroke-linejoin="round" stroke-linecap="round"/><rect x="895.4" y="790.0" width="8" height="8"/><rect x="907.7" y="790.0" width="8" height="8"/><rect x="920.1" y="795.3" width="8" height="8"/><rect x="932.4" y="795.3" width="8" height="8"/><rect x="944.7" y="795.0" width="8" height="8"/><rect x="957.0" y="795.0" width="8" height="8"/><rect x="969.4" y="795.3" width="8" height="8"/><rect x="981.7" y="795.3" width="8" height="8"/><rect x="994.0" y="795.3" width="8" height="8"/><rect x="1006.4" y="795.3" width="8" height="8"/><rect x="1018.7" y="793.2" width="8" height="8"/><rect x="1031.0" y="793.2" width="8" height="8"/><rect x="1043.4" y="784.6" width="8" height="8"/><rect x="1055.7" y="784.6" width="8" height="8"/><rect x="1068.0" y="779.6" width="8" height="8"/><rect x="1080.3" y="779.6" width="8" height="8"/><rect x="1092.7" y="780.3" width="8" height="8"/><rect x="1105.0" y="780.3" width="8" height="8"/><rect x="1117.3" y="771.1" width="8" height="8"/><rect x="1129.7" y="771.1" width="8" height="8"/><rect x="1142.0" y="753.9" width="8" height="8"/><rect x="1154.3" y="753.9" width="8" height="8"/><rect x="1166.7" y="744.3" width="8" height="8"/><rect x="1179.0" y="744.3" width="8" height="8"/><rect x="1191.3" y="721.8" width="8" height="8"/><rect x="1203.7" y="721.8" width="8" height="8"/><rect x="1216.0" y="766.8" width="8" height="8"/><rect x="1228.3" y="766.8" width="8" height="8"/><rect x="1240.6" y="765.7" width="8" height="8"/><rect x="1253.0" y="765.7" width="8" height="8"/><rect x="1265.3" y="767.5" width="8" height="8"/><rect x="1277.6" y="767.5" width="8" height="8"/><rect x="1290.0" y="775.0" width="8" height="8"/><rect x="1302.3" y="775.0" width="8" height="8"/><rect x="1314.6" y="766.8" width="8" height="8"/><rect x="1327.0" y="766.8" width="8" height="8"/><rect x="1339.3" y="765.7" width="8" height="8"/><rect x="1351.6" y="765.7" width="8" height="8"/><rect x="1363.9" y="772.8" width="8" height="8"/><rect x="1376.3" y="772.8" width="8" height="8"/><rect x="1388.6" y="777.8" width="8" height="8"/><rect x="1400.9" y="777.8" width="8" height="8"/><rect x="1413.3" y="779.6" width="8" height="8"/><rect x="1425.6" y="779.6" width="8" height="8"/><rect x="1437.9" y="782.5" width="8" height="8"/><rect x="1450.2" y="782.5" width="8" height="8"/><rect x="1462.6" y="785.7" width="8" height="8"/><rect x="1474.9" y="785.7" width="8" height="8"/></g><g fill="#f7a35c"><polyline points="899.4,663.8 911.7,663.8 924.1,664.8 936.4,664.8 948.7,663.8 961.0,663.8 973.4,664.5 985.7,664.5 998.0,663.8 1010.4,663.8 1022.7,663.4 1035.0,663.4 1047.4,663.8 1059.7,663.8 1072.0,665.5 1084.3,665.5 1096.7,666.6 1109.0,666.6 1121.3,670.2 1133.7,670.2 1146.0,669.8 1158.3,669.8 1170.7,677.0 1183.0,677.0 1195.3,672.0 1207.7,672.0 1220.0,675.5 1232.3,675.5 1244.6,679.5 1257.0,679.5 1269.3,673.4 1281.6,673.4 1294.0,671.3 1306.3,671.3 1318.6,672.0 1331.0,672.0 1343.3,670.9 1355.6,670.9 1367.9,664.1 1380.3,664.1 1392.6,663.0 1404.9,663.0 1417.3,660.2 1429.6,660.2 1441.9,661.3 1454.2,661.3 1466.6,660.2 1478.9,660.2" fill="none" stroke="#f7a35c" stroke-width="2" stroke-linejoin="round" stroke-linecap="round"/><path d="M899.4,659.3L903.9,667.3L894.9,667.3Z"/><path d="M911.7,659.3L916.2,667.3L907.2,667.3Z"/><path d="M924.1,660.3L928.6,668.3L919.6,668.3Z"/><path d="M936.4,660.3L940.9,668.3L931.9,668.3Z"/><path d="M948.7,659.3L953.2,667.3L944.2,667.3Z"/><path d="M961.0,659.3L965.5,667.3L956.5,667.3Z"/><path d="M973.4,660.0L977.9,668.0L968.9,668.0Z"/><path d="M985.7,660.0L990.2,668.0L981.2,668.0Z"/><path d="M998.0,659.3L1002.5,667.3L993.5,667.3Z"/><path d="M1010.4,659.3L1014.9,667.3L1005.9,667.3Z"/><path d="M1022.7,658.9L1027.2,666.9L1018.2,666.9Z"/><path d="M1035.0,658.9L1039.5,666.9L1030.5,666.9Z"/><path d="M1047.4,659.3L1051.9,667.3L1042.9,667.3Z"/><path d="M1059.7,659.3L1064.2,667.3L1055.2,667.3Z"/><path d="M1072.0,661.0L1076.5,669.0L1067.5,669.0Z"/><path d="M1084.3,661.0L1088.8,669.0L1079.8,669.0Z"/><path d="M1096.7,662.1L1101.2,670.1L1092.2,670.1Z"/><path d="M1109.0,662.1L1113.5,670.1L1104.5,670.1Z"/><path d="M1121.3,665.7L1125.8,673.7L1116.8,673.7Z"/><path d="M1133.7,665.7L1138.2,673.7L1129.2,673.7Z"/><path d="M1146.0,665.3L1150.5,673.3L1141.5,673.3Z"/><path d="M1158.3,665.3L1162.8,673.3L1153.8,673.3Z"/><path d="M1170.7,672.5L1175.2,680.5L1166.2,680.5Z"/><path d="M1183.0,672.5L1187.5,680.5L1178.5,680.5Z"/><path d="M1195.3,667.5L1199.8,675.5L1190.8,675.5Z"/><path d="M1207.7,667.5L1212.2,675.5L1203.2,675.5Z"/><path d="M1220.0,671.0L1224.5,679.0L1215.5,679.0Z"/><path d="M1232.3,671.0L1236.8,679.0L1227.8,679.0Z"/><path d="M1244.6,675.0L1249.1,683.0L1240.1,683.0Z"/><path d="M1257.0,675.0L1261.5,683.0L1252.5,683.0Z"/><path d="M1269.3,668.9L1273.8,676.9L1264.8,676.9Z"/><path d="M1281.6,668.9L1286.1,676.9L1277.1,676.9Z"/><path d="M1294.0,666.8L1298.5,674.8L1289.5,674.8Z"/><path d="M1306.3,666.8L1310.8,674.8L1301.8,674.8Z"/><path d="M1318.6,667.5L1323.1,675.5L1314.1,675.5Z"/><path d="M1331.0,667.5L1335.5,675.5L1326.5,675.5Z"/><path d="M1343.3,666.4L1347.8,674.4L1338.8,674.4Z"/><path d="M1355.6,666.4L1360.1,674.4L1351.1,674.4Z"/><path d="M1367.9,659.6L1372.4,667.6L1363.4,667.6Z"/><path d="M1380.3,659.6L1384.8,667.6L1375.8,667.6Z"/><path d="M1392.6,658.5L1397.1,666.5L1388.1,666.5Z"/><path d="M1404.9,658.5L1409.4,666.5L1400.4,666.5Z"/><path d="M1417.3,655.7L1421.8,663.7L1412.8,663.7Z"/><path d="M1429.6,655.7L1434.1,663.7L1425.1,663.7Z"/><path d="M1441.9,656.8L1446.4,664.8L1437.4,664.8Z"/><path d="M1454.2,656.8L1458.8,664.8L1449.8,664.8Z"/><path d="M1466.6,655.7L1471.1,663.7L1462.1,663.7Z"/><path d="M1478.9,655.7L1483.4,663.7L1474.4,663.7Z"/></g><text x="902.4" y="833" text-anchor="end" transform="rotate(-45 902.4 833)" class="ax" style="font-size:12px;letter-spacing:0.6px">Sat...</text><text x="927.1" y="833" text-anchor="end" transform="rotate(-45 927.1 833)" class="ax" style="font-size:12px;letter-spacing:0.6px">00</text><text x="951.7" y="833" text-anchor="end" transform="rotate(-45 951.7 833)" class="ax" style="font-size:12px;letter-spacing:0.6px">00</text><text x="976.4" y="833" text-anchor="end" transform="rotate(-45 976.4 833)" class="ax" style="font-size:12px;letter-spacing:0.6px">00</text><text x="1001.0" y="833" text-anchor="end" transform="rotate(-45 1001.0 833)" class="ax" style="font-size:12px;letter-spacing:0.6px">00</text><text x="1025.7" y="833" text-anchor="end" transform="rotate(-45 1025.7 833)" class="ax" style="font-size:12px;letter-spacing:0.6px">00</text><text x="1050.4" y="833" text-anchor="end" transform="rotate(-45 1050.4 833)" class="ax" style="font-size:12px;letter-spacing:0.6px">00</text><text x="1075.0" y="833" text-anchor="end" transform="rotate(-45 1075.0 833)" class="ax" style="font-size:12px;letter-spacing:0.6px">00</text><text x="1099.7" y="833" text-anchor="end" transform="rotate(-45 1099.7 833)" class="ax" style="font-size:12px;letter-spacing:0.6px">00</text><text x="1124.3" y="833" text-anchor="end" transform="rotate(-45 1124.3 833)" class="ax" style="font-size:12px;letter-spacing:0.6px">00</text><text x="1149.0" y="833" text-anchor="end" transform="rotate(-45 1149.0 833)" class="ax" style="font-size:12px;letter-spacing:0.6px">00</text><text x="1173.7" y="833" text-anchor="end" transform="rotate(-45 1173.7 833)" class="ax" style="font-size:12px;letter-spacing:0.6px">00</text><text x="1198.3" y="833" text-anchor="end" transform="rotate(-45 1198.3 833)" class="ax" style="font-size:12px;letter-spacing:0.6px">24</text><text x="1223.0" y="833" text-anchor="end" transform="rotate(-45 1223.0 833)" class="ax" style="font-size:12px;letter-spacing:0.6px">26</text><text x="1247.6" y="833" text-anchor="end" transform="rotate(-45 1247.6 833)" class="ax" style="font-size:12px;letter-spacing:0.6px">28</text><text x="1272.3" y="833" text-anchor="end" transform="rotate(-45 1272.3 833)" class="ax" style="font-size:12px;letter-spacing:0.6px">30</text><text x="1297.0" y="833" text-anchor="end" transform="rotate(-45 1297.0 833)" class="ax" style="font-size:12px;letter-spacing:0.6px">32</text><text x="1321.6" y="833" text-anchor="end" transform="rotate(-45 1321.6 833)" class="ax" style="font-size:12px;letter-spacing:0.6px">34</text><text x="1346.3" y="833" text-anchor="end" transform="rotate(-45 1346.3 833)" class="ax" style="font-size:12px;letter-spacing:0.6px">36</text><text x="1370.9" y="833" text-anchor="end" transform="rotate(-45 1370.9 833)" class="ax" style="font-size:12px;letter-spacing:0.6px">38</text><text x="1395.6" y="833" text-anchor="end" transform="rotate(-45 1395.6 833)" class="ax" style="font-size:12px;letter-spacing:0.6px">40</text><text x="1420.3" y="833" text-anchor="end" transform="rotate(-45 1420.3 833)" class="ax" style="font-size:12px;letter-spacing:0.6px">42</text><text x="1444.9" y="833" text-anchor="end" transform="rotate(-45 1444.9 833)" class="ax" style="font-size:12px;letter-spacing:0.6px">44</text><text x="1469.6" y="833" text-anchor="end" transform="rotate(-45 1469.6 833)" class="ax" style="font-size:12px;letter-spacing:0.6px">46</text><text x="878" y="500.0" text-anchor="end" class="ax" style="letter-spacing:0.5px">-90</text><text x="878" y="565.0" text-anchor="end" class="ax" style="letter-spacing:0.5px">-96</text><text x="878" y="629.5" text-anchor="end" class="ax" style="letter-spacing:0.5px">-102</text><text x="878" y="693.5" text-anchor="end" class="ax" style="letter-spacing:0.5px">-108</text><text x="878" y="757.5" text-anchor="end" class="ax" style="letter-spacing:0.5px">-114</text><text x="878" y="821.6" text-anchor="end" class="ax" style="letter-spacing:0.5px">-120</text><text x="1501" y="500.0" class="ax" style="letter-spacing:0.5px">1500</text><text x="1501" y="565.0" class="ax" style="letter-spacing:0.5px">1200</text><text x="1501" y="629.5" class="ax" style="letter-spacing:0.5px">900</text><text x="1501" y="693.5" class="ax" style="letter-spacing:0.5px">600</text><text x="1501" y="757.5" class="ax" style="letter-spacing:0.5px">300</text><text x="1501" y="821.6" class="ax" style="letter-spacing:0.5px">0</text></g>
  <!-- export icons -->
  <g fill="#666"><rect x="714.5" y="460.5" width="18.5" height="4" rx="2"/><rect x="714.5" y="466" width="18.5" height="4" rx="2"/><rect x="714.5" y="471.5" width="18.5" height="4" rx="2"/></g>
  <g fill="#666"><rect x="1449" y="460.5" width="18.5" height="4" rx="2"/><rect x="1449" y="466" width="18.5" height="4" rx="2"/><rect x="1449" y="471.5" width="18.5" height="4" rx="2"/></g>
</svg>
<div class="t" style="left:246px;top:455px;font-size:18.5px;color:#333;letter-spacing:0.75px">LTO10032_1_08_1 - DLPRB &amp; ULPRB vs RSSI</div>
<div class="t" style="left:1026px;top:455px;font-size:18.5px;color:#333;letter-spacing:0.77px">LTO10032_1_08_1 - Volume vs RSSI</div>
<div class="t" style="left:746px;top:466px;font-size:12px;color:#666;letter-spacing:1.2px">Export</div>
<div class="t" style="left:1480px;top:466px;font-size:12px;color:#666;letter-spacing:1.2px">Export</div>

<!-- ============ dropdown ============ -->
<div class="a" style="left:1317px;top:231px;width:214px;height:120px;background:#fff;box-shadow:0 1px 3px rgba(0,0,0,0.3)"></div>
<div class="lbl" style="left:1350px;top:270px;letter-spacing:0.71px;color:#555">Hourly</div>
<div class="lbl" style="left:1350px;top:305px;letter-spacing:0.22px;color:#555">Daily</div>

<!-- ============ sidebar ============ -->
<div id="side" class="a"></div>
<div class="a" style="left:0;top:122px;width:250px;height:44px;background:#333942"></div>
<svg class="a" style="left:0;top:106px" width="250" height="721" viewBox="0 106 250 721">
  <g fill="#c3c5c8">
  <!-- home -->
  <path d="M31.7,135L41.8,144H38.8V151.5H34V146H29.4V151.5H24.6V144H21.6Z"/>
  <!-- upload -->
  <path d="M31.6,189.7L38,196.7H34.8V202.5H28.4V196.7H25.2Z"/><rect x="25.2" y="204" width="12.8" height="2.2"/>
  <!-- wrench -->
  <path d="M37.5,243.5A5.5,5.5 0 0 0 32.3,251L23,260.5A1.8,1.8 0 0 0 25.6,263L35,253.6A5.5,5.5 0 0 0 42.2,248.6L38.8,250.6L36,249L36,246Z"/>
  <!-- clipboard -->
  <path d="M29,297.5H34.5V299.5H39.5A1.5,1.5 0 0 1 41,301V315.5A1.5,1.5 0 0 1 39.5,317H24A1.5,1.5 0 0 1 22.5,315.5V301A1.5,1.5 0 0 1 24,299.5H29Z"/>
  <!-- hamburger -->
  <rect x="22.7" y="357" width="18.2" height="2.7"/><rect x="22.7" y="362" width="18.2" height="2.1"/><rect x="22.7" y="367" width="18.2" height="2.5"/>
  <!-- user -->
  <circle cx="31.5" cy="414" r="3.8"/><path d="M23.5,426V423.5Q23.5,419 31.5,419Q39.5,419 39.5,423.5V426Z"/>
  <!-- map pin -->
  <path d="M31.5,463.3A6.8,6.8 0 0 1 38.3,470.1Q38.3,474.5 31.5,482.3Q24.7,474.5 24.7,470.1A6.8,6.8 0 0 1 31.5,463.3Z"/>
  <!-- grid -->
  <rect x="22" y="519" width="5" height="5"/><rect x="28.8" y="519" width="5" height="5"/><rect x="35.6" y="519" width="5" height="5"/>
  <rect x="22" y="525.8" width="5" height="5"/><rect x="28.8" y="525.8" width="5" height="5"/><rect x="35.6" y="525.8" width="5" height="5"/>
  <rect x="22" y="532.6" width="5" height="5"/><rect x="28.8" y="532.6" width="5" height="5"/><rect x="35.6" y="532.6" width="5" height="5"/>
  </g>
  <g fill="#2b3038">
   <path d="M27,303.7H36V305.3H27Z M27,307.5H36V309.1H27Z M27,311.4H33.5V313H27Z"/>
   <circle cx="31.5" cy="470.2" r="2"/>
  </g>
</svg>
<div class="mi" style="top:137px;color:#e2e4e6">KPI Dashboard</div>
<div class="mi" style="top:192px">KPI Import</div>
<div class="mi" style="top:247px">Cluster Management</div>
<div class="mi" style="top:302px">New Execution</div>
<div class="mi" style="top:357px">Executions</div>
<div class="mi" style="top:412px">User Management</div>
<div class="mi" style="top:467px">Map</div>
<div class="mi" style="top:522px">Cell DB Import</div>
<div class="t" style="left:14px;top:814px;font-size:13px;color:#8d9095;letter-spacing:0.36px">Copyright © 2015 Yupana LLC</div>

<!-- annotation arrow -->
<svg class="a" style="left:0;top:0" width="1600" height="841">
  <path d="M180.5,137.8L244,161.5" stroke="#0000ff" stroke-width="1.4"/>
  <path d="M250.5,164L240.3,164.3L242.7,158Z" fill="#0000ff"/>
  <path d="M226.3,135.3L229.6,132.5V143.2" fill="none" stroke="#ff0000" stroke-width="1.9"/>
  <!-- hand cursor -->
  <path d="M210.5,149.5Q212.5,149 213,151V157.5Q215,156.5 216,158Q218,157.5 218.5,159.5Q220.5,159.5 220.5,161.5V165Q220,168 218.5,170H210Q208,168 205.5,163.5Q205,161.5 207,161.5L208.5,163V151Q209,149.5 210.5,149.5Z" fill="#fff" stroke="#000" stroke-width="1"/>
</svg>


<!-- status bar -->
<div class="a" style="left:0;top:826px;width:536px;height:15px;background:#f2f2f2;border-top:1px solid #dadada;border-right:1px solid #dadada;border-top-right-radius:4px"></div>
<div class="t" style="left:1px;top:833px;font-size:12.5px;color:#555;letter-spacing:0.14px">pimcatcher.yupanatech.com/new_home</div>

</body></html>
